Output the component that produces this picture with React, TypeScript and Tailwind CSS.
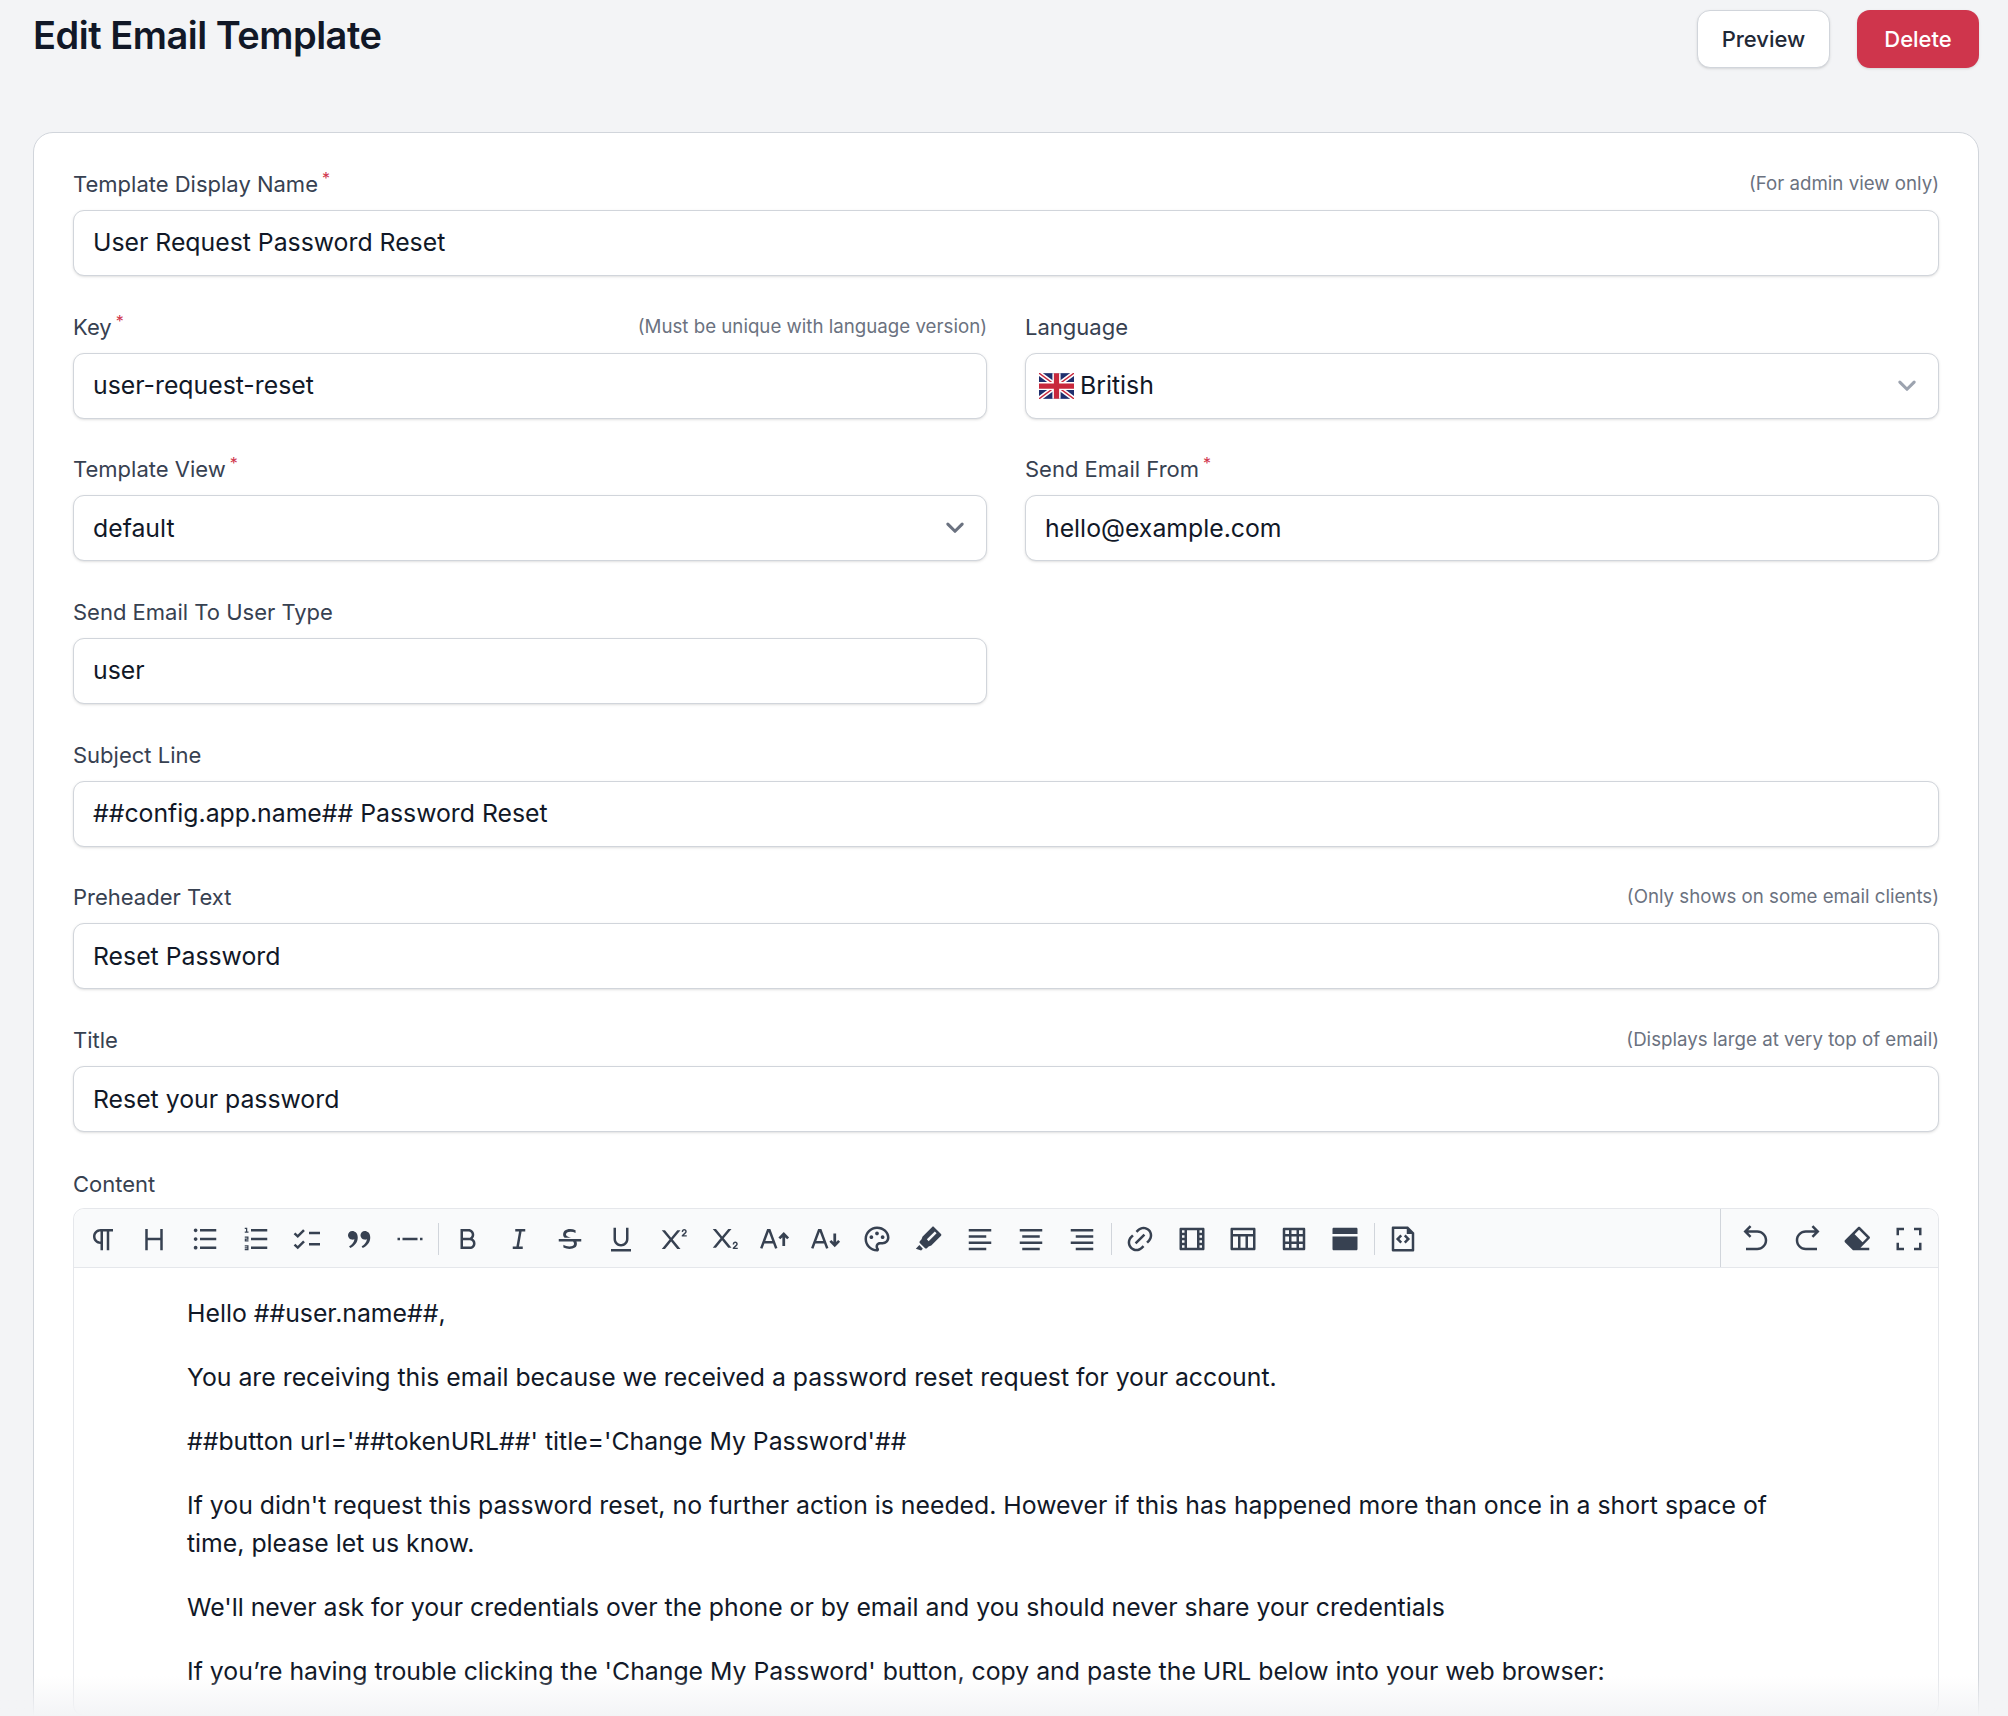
import type { ReactNode } from "react";
import {
  RiParagraph,
  RiHeading,
  RiListUnordered,
  RiListOrdered,
  RiDoubleQuotesR,
  RiSeparator,
  RiBold,
  RiItalic,
  RiStrikethrough,
  RiUnderline,
  RiSuperscript,
  RiSubscript,
  RiPaletteLine,
  RiMarkPenFill,
  RiAlignLeft,
  RiAlignCenter,
  RiAlignRight,
  RiLink,
  RiFilmLine,
  RiTableLine,
  RiGridLine,
  RiLayoutTopFill,
  RiFileCodeLine,
  RiArrowGoBackLine,
  RiArrowGoForwardLine,
  RiEraserFill,
  RiFullscreenLine,
} from "react-icons/ri";

function FontSize({ down = false }: { down?: boolean }) {
  return (
    <svg viewBox="0 0 24 24" width="30" height="30" fill="none" stroke="currentColor" strokeWidth="2">
      <path d="M1 19.500 6.400 5h1.200L13 19.500M3 14.500h8" />
      {down ? (
        <path d="M19 7.500v9.500M15.500 13.500 19 17l3.500-3.500" strokeWidth="2.200" />
      ) : (
        <path d="M19 17.500V8M15.500 11.500 19 8l3.500 3.500" strokeWidth="2.200" />
      )}
    </svg>
  );
}

function TaskList() {
  return (
    <svg viewBox="0 0 24 24" width="30" height="30" fill="none" stroke="currentColor" strokeWidth="2">
      <path d="m2 7.500 2.600 2.400 5-5M2 16.500l2.600 2.400 5-5M13.600 7.200h8.800M13.600 16.200h8.800" />
    </svg>
  );
}

function Flag() {
  return (
    <svg viewBox="0 0 60 44" width="35" height="26" className="shrink-0">
      <rect width="60" height="44" fill="#1f2f6e" />
      <path d="M0 0 60 44M60 0 0 44" stroke="#fff" strokeWidth="8" />
      <path d="M0 0 60 44M60 0 0 44" stroke="#c8283c" strokeWidth="2.500" />
      <path d="M30 0v44M0 22h60" stroke="#fff" strokeWidth="14" />
      <path d="M30 0v44M0 22h60" stroke="#c8283c" strokeWidth="9" />
    </svg>
  );
}

function Chevron({ color }: { color: string }) {
  return (
    <svg viewBox="0 0 20 20" width="26" height="26" fill="none" stroke={color} strokeWidth="2.400" className="shrink-0">
      <path d="m4.500 7 5.500 5.500L15.500 7" strokeLinecap="round" strokeLinejoin="round" />
    </svg>
  );
}

function Field({
  label,
  required,
  hint,
  children,
}: {
  label: string;
  required?: boolean;
  hint?: string;
  children: ReactNode;
}) {
  return (
    <div>
      <div className="mb-4 flex h-[22px] items-center justify-between pt-[2px]">
        <div className="text-[22px] leading-[22px] text-[#374151]">
          {label}
          {required && <sup className="ml-1 text-[16px] text-[#d0354c]">*</sup>}
        </div>
        {hint && <div className="text-[18.700px] leading-[22px] text-[#6b7280]">{hint}</div>}
      </div>
      {children}
    </div>
  );
}

function Box({ children }: { children: ReactNode }) {
  return (
    <div className="flex h-[66px] items-center rounded-[11px] border border-[#d1d5db] bg-white px-[19px] text-[24.800px] text-[#111827] shadow-sm">
      {children}
    </div>
  );
}

function Divider() {
  return <div className="mx-[3px] h-[32px] w-px bg-[#d1d5db]" />;
}

const I = 30;

function Tool({ children }: { children: ReactNode }) {
  return <div className="flex w-[51.200px] shrink-0 items-center justify-center">{children}</div>;
}

export default function App() {
  return (
    <div
      className="relative h-[1716px] overflow-hidden bg-[#f3f4f6] pt-[10px] pr-[29px] pl-[33px]"
      style={{ fontFamily: "Inter, 'Noto Sans', sans-serif" }}
    >
      <div className="flex items-start justify-between">
        <h1 className="text-[38px] leading-[50px] font-semibold tracking-[-0.5px] text-[#111827]">
          Edit Email Template
        </h1>
        <div className="flex gap-[27px]">
          <button className="h-[58px] w-[133px] rounded-[13px] border border-[#d1d5db] bg-white text-[22px] font-medium text-[#1f2937] shadow-sm">
            Preview
          </button>
          <button className="h-[58px] w-[122px] rounded-[13px] bg-[#cf354c] text-[22px] font-medium text-white shadow-sm">
            Delete
          </button>
        </div>
      </div>

      <div className="mt-[64px] rounded-[20px] border border-[#d1d5db] bg-white px-[39px] pt-[39px] pb-10">
        <div className="grid grid-cols-2 gap-x-[38px] gap-y-[38.700px]">
          <div className="col-span-2">
            <Field label="Template Display Name" required hint="(For admin view only)">
              <Box>User Request Password Reset</Box>
            </Field>
          </div>
          <Field label="Key" required hint="(Must be unique with language version)">
            <Box>user-request-reset</Box>
          </Field>
          <Field label="Language">
            <div className="flex h-[66px] items-center gap-[6px] rounded-[11px] border border-[#d1d5db] bg-white pr-[18px] pl-[13px] text-[24.800px] text-[#111827] shadow-sm">
              <Flag />
              <span className="flex-1">British</span>
              <Chevron color="#9ca3af" />
            </div>
          </Field>
          <Field label="Template View" required>
            <div className="flex h-[66px] items-center justify-between rounded-[11px] border border-[#d1d5db] bg-white pr-[18px] pl-[19px] text-[24.800px] text-[#111827] shadow-sm">
              <span>default</span>
              <Chevron color="#6b7280" />
            </div>
          </Field>
          <Field label="Send Email From" required>
            <Box>hello@example.com</Box>
          </Field>
          <Field label="Send Email To User Type">
            <Box>user</Box>
          </Field>
          <div />
          <div className="col-span-2">
            <Field label="Subject Line">
              <Box>##config.app.name## Password Reset</Box>
            </Field>
          </div>
          <div className="col-span-2">
            <Field label="Preheader Text" hint="(Only shows on some email clients)">
              <Box>Reset Password</Box>
            </Field>
          </div>
          <div className="col-span-2">
            <Field label="Title" hint="(Displays large at very top of email)">
              <Box>Reset your password</Box>
            </Field>
          </div>
          <div className="col-span-2">
            <div className="mb-[15px] h-[22px] pt-[2px] text-[22px] leading-[22px] text-[#374151]">Content</div>
            <div className="rounded-[11px] border border-[#e5e7eb]">
              <div className="flex h-[59px] items-center justify-between rounded-t-[11px] border-b border-[#e5e7eb] bg-[#f9fafb] pl-[3px] text-[#374151]">
                <div className="flex items-center pt-[2px]">
                  <Tool><RiParagraph size={I} /></Tool>
                  <Tool><RiHeading size={I} /></Tool>
                  <Tool><RiListUnordered size={I} /></Tool>
                  <Tool><RiListOrdered size={I} /></Tool>
                  <Tool><TaskList /></Tool>
                  <Tool><RiDoubleQuotesR size={I} /></Tool>
                  <Tool><RiSeparator size={I} /></Tool>
                  <Divider />
                  <Tool><RiBold size={I} /></Tool>
                  <Tool><RiItalic size={I} /></Tool>
                  <Tool><RiStrikethrough size={I} /></Tool>
                  <Tool><RiUnderline size={I} /></Tool>
                  <Tool><RiSuperscript size={I} /></Tool>
                  <Tool><RiSubscript size={I} /></Tool>
                  <Tool><FontSize /></Tool>
                  <Tool><FontSize down /></Tool>
                  <Tool><RiPaletteLine size={I} /></Tool>
                  <Tool><RiMarkPenFill size={I} /></Tool>
                  <Tool><RiAlignLeft size={I} /></Tool>
                  <Tool><RiAlignCenter size={I} /></Tool>
                  <Tool><RiAlignRight size={I} /></Tool>
                  <Divider />
                  <Tool><RiLink size={I} /></Tool>
                  <Tool><RiFilmLine size={I} /></Tool>
                  <Tool><RiTableLine size={I} /></Tool>
                  <Tool><RiGridLine size={I} /></Tool>
                  <Tool><RiLayoutTopFill size={I} /></Tool>
                  <Divider />
                  <Tool><RiFileCodeLine size={I} /></Tool>
                </div>
                <div className="flex h-full items-center border-l border-[#d1d5db] pt-[2px] pr-[3px] pl-[9px]">
                  <Tool><RiArrowGoBackLine size={I} /></Tool>
                  <Tool><RiArrowGoForwardLine size={I} /></Tool>
                  <Tool><RiEraserFill size={I} /></Tool>
                  <Tool><RiFullscreenLine size={I} /></Tool>
                </div>
              </div>
              <div className="flex flex-col gap-[25.600px] pt-[26px] pr-[150px] pb-6 pl-[113px] text-[24.800px] leading-[38.400px] text-[#111827]">
                <p>Hello ##user.name##,</p>
                <p>You are receiving this email because we received a password reset request for your account.</p>
                <p>##button url='##tokenURL##' title='Change My Password'##</p>
                <p>
                  If you didn't request this password reset, no further action is needed. However if this has happened
                  more than once in a short space of time, please let us know.
                </p>
                <p>We'll never ask for your credentials over the phone or by email and you should never share your credentials</p>
                <p>If you’re having trouble clicking the 'Change My Password' button, copy and paste the URL below into your web browser:</p>
              </div>
            </div>
          </div>
        </div>
      </div>

      {/* bottom fade */}
      <div className="pointer-events-none absolute right-0 bottom-0 left-0 h-[40px] bg-gradient-to-b from-transparent to-[#f3f4f6]" />
    </div>
  );
}
